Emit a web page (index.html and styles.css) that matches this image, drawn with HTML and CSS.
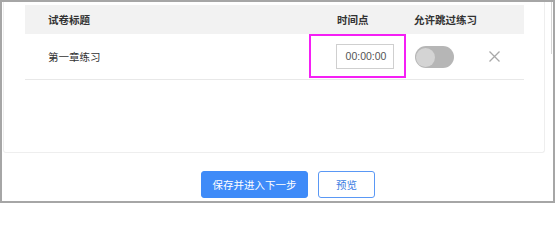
FILE: index.html
```html
<!DOCTYPE html>
<html lang="zh-CN">
<head>
<meta charset="utf-8">
<title>试卷设置</title>
<link rel="stylesheet" href="styles.css">
</head>
<body>
<div class="frame">
  <div class="scroll-thumb"></div>
  <div class="card">
    <div class="table">
      <div class="thead">
        <div class="col c-title">试卷标题</div>
        <div class="col c-time">时间点</div>
        <div class="col c-skip">允许跳过练习</div>
        <div class="col c-del"></div>
      </div>
      <div class="trow">
        <div class="col c-title">第一章练习</div>
        <div class="col c-time-cell">
          <div class="highlight">
            <input class="time-input" type="text" value="00:00:00">
          </div>
        </div>
        <div class="col c-skip">
          <span class="switch"><span class="knob"></span></span>
        </div>
        <div class="col c-del">
          <svg class="close" width="11" height="11" viewBox="0 0 11 11">
            <path d="M0.5 0.5 L10.5 10.5 M10.5 0.5 L0.5 10.5" stroke="#a8a8a8" stroke-width="1.3" fill="none"/>
          </svg>
        </div>
      </div>
    </div>
  </div>
  <div class="actions">
    <button class="btn btn-primary">保存并进入下一步</button>
    <button class="btn btn-plain">预览</button>
  </div>
</div>
</body>
</html>
```
FILE: styles.css
```css
* { box-sizing: border-box; }
html, body {
  margin: 0;
  padding: 0;
  background: #fff;
}
body {
  font-family: "Noto Sans CJK SC", "Noto Sans", sans-serif;
  font-size: 10.5px;
  color: #333;
}
.frame {
  position: relative;
  width: 555px;
  height: 203px;
  border: 2px solid #a6a6a6;
  overflow: hidden;
  background: #fff;
}
.scroll-thumb {
  position: absolute;
  left: 549px;
  top: 0;
  width: 1px;
  height: 52px;
  background: #d4d4d4;
}
.card {
  margin: 0 8px 0 1px;
  border: 1px solid #eeeeee;
  border-top: none;
  border-radius: 0 0 3px 3px;
  padding: 3px 20px 0 21px;
  height: 151px;
}
.thead, .trow {
  display: flex;
  align-items: center;
  white-space: nowrap;
}
.thead {
  height: 29px;
  background: #f2f2f2;
  font-weight: 600;
  color: #333;
}
.trow {
  height: 46px;
  border-bottom: 1px solid #e8e8e8;
  align-items: flex-start;
}
.col { flex: none; }
.c-title { width: 284px; padding-left: 23px; }
.c-time { width: 97px; padding-left: 28px; }
.c-skip { width: 70px; padding-left: 8px; }
.c-del { flex: 1; padding-left: 13px; }
.trow .c-title { line-height: 45px; }
.c-time-cell { width: 97px; }
.trow .c-skip, .trow .c-del {
  height: 45px;
  display: flex;
  align-items: center;
}
.trow .c-skip { padding-left: 9px; padding-top: 1px; }
.highlight {
  height: 44px;
  border: 2px solid #f51ff5;
  display: flex;
  align-items: center;
  padding-left: 25px;
}
.time-input {
  width: 58px;
  height: 25px;
  border: 1px solid #cfcfcf;
  border-radius: 0;
  font-family: "Liberation Sans", "Noto Sans", sans-serif;
  font-size: 10.5px;
  color: #555;
  text-align: center;
  padding: 0 0 0 2px;
  outline: none;
  background: #fff;
}
.switch {
  display: block;
  width: 39px;
  height: 22px;
  border-radius: 11px;
  background: #b6b6b6;
  padding: 1.5px 0 0 1px;
}
.knob {
  display: block;
  width: 19px;
  height: 19px;
  border-radius: 50%;
  background: #d4d4d4;
}
.close { display: block; }
.actions {
  display: flex;
  gap: 10px;
  padding-left: 199px;
  margin-top: 18px;
}
.btn {
  height: 27px;
  border-radius: 3px;
  font-family: "Noto Sans CJK SC", "Noto Sans", sans-serif;
  font-size: 10.5px;
  padding: 0;
  cursor: pointer;
}
.btn-primary {
  width: 107px;
  background: #3f8bf8;
  border: 1px solid #3f8bf8;
  color: #fff;
}
.btn-plain {
  width: 57px;
  background: #fff;
  border: 1px solid #5a98f5;
  color: #3b7de2;
}
```
